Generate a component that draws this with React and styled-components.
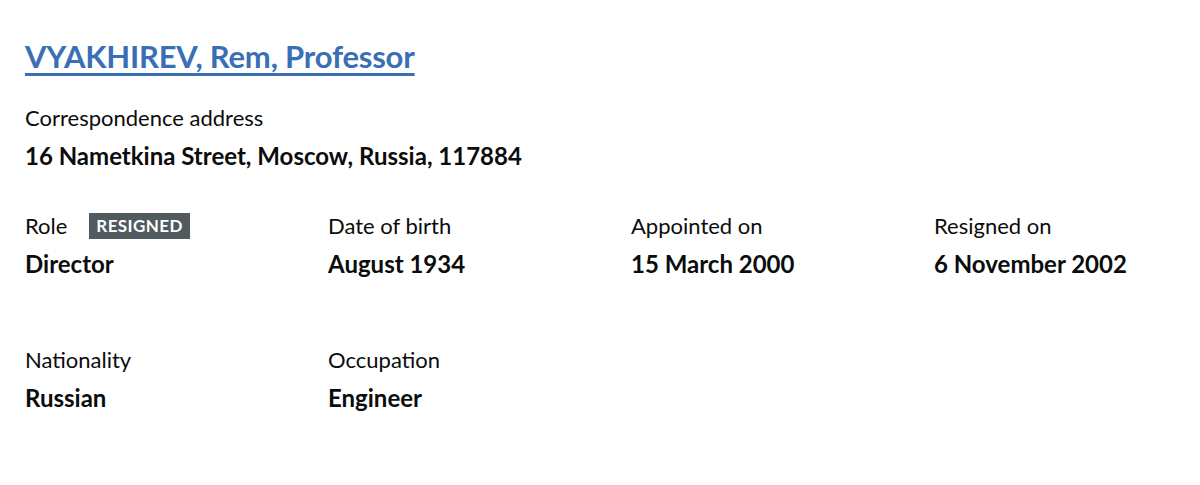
import React from "react";
import styled, { createGlobalStyle } from "styled-components";

const Global = createGlobalStyle`
  html, body { margin: 0; padding: 0; background: #fff; }
  body { font-family: Lato, "Noto Sans", Arial, sans-serif; color: #0b0c0c; }
`;

const Page = styled.main`
  padding: 36px 25px 0 25px;
`;

const Title = styled.h2`
  margin: 0 0 27px 0;
  font-size: 31px;
  line-height: 40px;
  font-weight: 700;
  letter-spacing: -0.2px;
  a {
    color: #3a6fb6;
    text-decoration: underline;
    text-decoration-thickness: 3px;
    text-underline-offset: 5px;
  }
`;

const Field = styled.dl`
  margin: 0;
`;

const Label = styled.dt`
  display: flex;
  align-items: center;
  gap: 22px;
  font-size: 22px;
  line-height: 30px;
  margin: 0 0 8px 0;
`;

const Value = styled.dd`
  margin: 0;
  font-size: 24px;
  line-height: 30px;
  font-weight: 700;
`;

const Address = styled(Field)`
  margin-bottom: 40px;
`;

const Row = styled.div`
  display: grid;
  grid-template-columns: repeat(4, 303px);
  margin-bottom: ${(p) => p.$gap || 0}px;
`;

const Tag = styled.span`
  display: inline-block;
  background: #505a5f;
  color: #fff;
  font-size: 17px;
  line-height: 26px;
  font-weight: 700;
  letter-spacing: 0.4px;
  padding: 0 7px;
  text-transform: uppercase;
`;

const Item = ({ label, value, tag }) => (
  <Field>
    <Label>
      {label}
      {tag && <Tag>{tag}</Tag>}
    </Label>
    <Value>{value}</Value>
  </Field>
);

export default function App() {
  return (
    <>
      <Global />
      <Page>
        <Title>
          <a href="#">VYAKHIREV, Rem, Professor</a>
        </Title>
        <Address>
          <Label>Correspondence address</Label>
          <Value>16 Nametkina Street, Moscow, Russia, 117884</Value>
        </Address>
        <Row $gap={66}>
          <Item label="Role" value="Director" tag="Resigned" />
          <Item label="Date of birth" value="August 1934" />
          <Item label="Appointed on" value="15 March 2000" />
          <Item label="Resigned on" value="6 November 2002" />
        </Row>
        <Row>
          <Item label="Nationality" value="Russian" />
          <Item label="Occupation" value="Engineer" />
        </Row>
      </Page>
    </>
  );
}
